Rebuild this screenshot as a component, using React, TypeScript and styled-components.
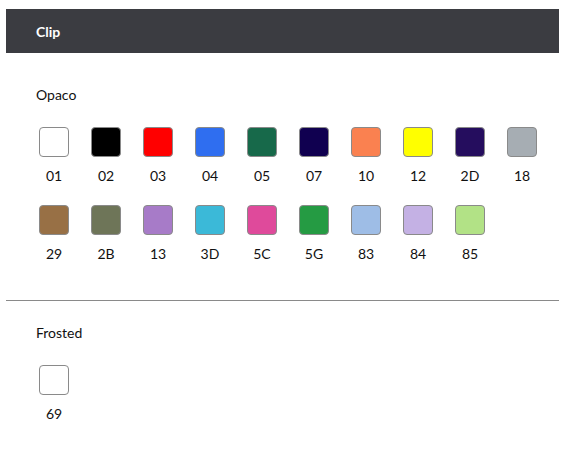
import styled, { createGlobalStyle } from "styled-components";

const GlobalStyle = createGlobalStyle`
  html, body {
    margin: 0;
    padding: 0;
    background: #ffffff;
    font-family: Lato, "Liberation Sans", sans-serif;
    color: #111111;
  }
`;

const Page = styled.div`
  padding: 9px 10px 0 6px;
`;

const Header = styled.div`
  height: 44px;
  background: #3b3c41;
  display: flex;
  align-items: center;
  padding-left: 30px;
  color: #ffffff;
  font-weight: 700;
  font-size: 14px;
`;

const Section = styled.section<{ $top: number }>`
  padding: ${(p) => p.$top}px 0 38px 30px;
`;

const Title = styled.div`
  font-size: 14px;
  line-height: 17px;
  margin-bottom: 24px;
`;

const Grid = styled.div`
  display: flex;
  flex-wrap: wrap;
  column-gap: 16px;
  row-gap: 21px;
`;

const Item = styled.div`
  width: 36px;
  display: flex;
  flex-direction: column;
  align-items: center;
`;

const Swatch = styled.div<{ $color: string }>`
  width: 28px;
  height: 28px;
  border: 1px solid #8a8a8a;
  border-radius: 4px;
  background: ${(p) => p.$color};
`;

const Label = styled.div`
  margin-top: 10px;
  font-size: 14px;
  line-height: 17px;
  color: #111111;
`;

const Divider = styled.hr`
  margin: 0;
  border: none;
  border-top: 1px solid #8a8a8a;
`;

const opaco = [
  { code: "01", color: "#ffffff" },
  { code: "02", color: "#000000" },
  { code: "03", color: "#ff0000" },
  { code: "04", color: "#2f6ef0" },
  { code: "05", color: "#17694a" },
  { code: "07", color: "#100050" },
  { code: "10", color: "#fa8150" },
  { code: "12", color: "#ffff00" },
  { code: "2D", color: "#250d5e" },
  { code: "18", color: "#a6adb3" },
  { code: "29", color: "#987045" },
  { code: "2B", color: "#6e7558" },
  { code: "13", color: "#a77bc8" },
  { code: "3D", color: "#3bb9d8" },
  { code: "5C", color: "#df4a9b" },
  { code: "5G", color: "#259b43" },
  { code: "83", color: "#9ebde6" },
  { code: "84", color: "#c4b1e4" },
  { code: "85", color: "#b2e286" },
];

const frosted = [{ code: "69", color: "#ffffff" }];

const ColorGroup = ({ title, items, top }: { title: string; items: { code: string; color: string }[]; top: number }) => (
  <Section $top={top}>
    <Title>{title}</Title>
    <Grid>
      {items.map((c) => (
        <Item key={c.code}>
          <Swatch $color={c.color} />
          <Label>{c.code}</Label>
        </Item>
      ))}
    </Grid>
  </Section>
);

export default function App() {
  return (
    <Page>
      <GlobalStyle />
      <Header>Clip</Header>
      <ColorGroup title="Opaco" items={opaco} top={33} />
      <Divider />
      <ColorGroup title="Frosted" items={frosted} top={23} />
    </Page>
  );
}
